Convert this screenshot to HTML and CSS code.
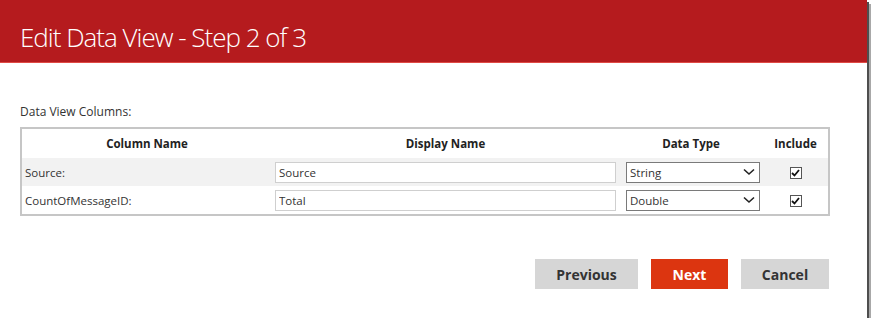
FILE: index.html
```html
<!DOCTYPE html>
<html lang="en">
<head>
  <meta charset="UTF-8" />
  <title>Edit Data View - Step 2 of 3</title>
  <link rel="stylesheet" href="styles.css">
</head>
<body>

  <div class="window">
    <div class="header">
      <h1>Edit Data View - Step 2 of 3</h1>
    </div>

    <div class="content">
      <div class="label">Data View Columns:</div>

      <table class="columns">
        <thead>
          <tr>
            <th class="col-name">Column Name</th>
            <th class="col-display">Display Name</th>
            <th class="col-type">Data Type</th>
            <th class="col-include">Include</th>
          </tr>
        </thead>
        <tbody>
          <tr class="alt">
            <td>Source:</td>
            <td><input type="text" value="Source"></td>
            <td>
              <div class="select">
                <span>String</span>
                <svg width="12" height="8" viewBox="0 0 12 8"><path d="M1 1.5 L6 6 L11 1.5" fill="none" stroke="#222" stroke-width="1.6"/></svg>
              </div>
            </td>
            <td class="center"><span class="check"><svg width="9" height="8" viewBox="0 0 9 8"><path d="M1 4 L3.5 6.5 L8 1" fill="none" stroke="#111" stroke-width="1.8"/></svg></span></td>
          </tr>
          <tr>
            <td>CountOfMessageID:</td>
            <td><input type="text" value="Total"></td>
            <td>
              <div class="select">
                <span>Double</span>
                <svg width="12" height="8" viewBox="0 0 12 8"><path d="M1 1.5 L6 6 L11 1.5" fill="none" stroke="#222" stroke-width="1.6"/></svg>
              </div>
            </td>
            <td class="center"><span class="check"><svg width="9" height="8" viewBox="0 0 9 8"><path d="M1 4 L3.5 6.5 L8 1" fill="none" stroke="#111" stroke-width="1.8"/></svg></span></td>
          </tr>
        </tbody>
      </table>

      <div class="buttons">
        <button class="btn">Previous</button>
        <button class="btn primary">Next</button>
        <button class="btn">Cancel</button>
      </div>
    </div>
  </div>

</body>
</html>
```

FILE: styles.css
```css
body {
  margin: 0;
  background: #fff;
  font-family: "Open Sans", sans-serif;
  color: #333;
  overflow: hidden;
}

.window {
  width: 867px;
  height: 318px;
  background: #fff;
  box-shadow: 2px 2px 0 #4e4e4e, 4px 4px 0 #a8a8a8;
}

.header {
  height: 62px;
  background: #b51b1e;
  border-bottom: 1px solid #e04a45;
  display: flex;
  align-items: center;
  padding-left: 20px;
}
.header h1 {
  margin: 0;
  font-weight: 300;
  font-size: 26px;
  color: #fff;
  letter-spacing: -1px;
  padding-top: 12px;
}

.content { padding: 40px 0 0 20px; }

.label {
  font-size: 12px;
  color: #333;
  height: 24px;
  line-height: 18px;
}

.columns {
  width: 810px;
  border-collapse: collapse;
  border: 2px solid #c6c6c6;
  font-size: 11.5px;
}
.columns th {
  height: 27px;
  font-weight: 700;
  color: #222;
  font-size: 11.5px;
}
.columns td {
  height: 28px;
  padding: 0 3px;
  color: #333;
}
.columns tr.alt td { background: #f2f2f2; }
.col-name { width: 248px; }
.col-display { width: 345px; }
.col-type { width: 140px; }
.center { text-align: center; }

input[type="text"] {
  box-sizing: border-box;
  width: 341px;
  height: 21px;
  border: 1px solid #cfcfcf;
  background: #fff;
  font-family: "Open Sans", sans-serif;
  font-size: 11.5px;
  color: #333;
  padding: 0 3px;
  margin-left: 0;
}

.select {
  box-sizing: border-box;
  width: 134px;
  height: 21px;
  margin-left: 4px;
  border: 1px solid #7a7a7a;
  background: #fff;
  display: flex;
  align-items: center;
  justify-content: space-between;
  padding: 0 4px 0 3px;
}

.check {
  display: inline-flex;
  align-items: center;
  justify-content: center;
  box-sizing: border-box;
  width: 12px;
  height: 12px;
  border: 1px solid #555;
  background: #fff;
  vertical-align: middle;
}

.buttons {
  display: flex;
  justify-content: flex-end;
  gap: 13px;
  width: 809px;
  margin-top: 43px;
}
.btn {
  height: 30px;
  width: 88px;
  padding: 0;
  border: none;
  background: #d6d6d6;
  color: #333;
  font-family: "Open Sans", sans-serif;
  font-weight: 700;
  font-size: 14px;
}
.btn:first-child { width: 103px; }
.btn.primary {
  background: #dc3510;
  color: #fff;
  width: 77px;
}
```
